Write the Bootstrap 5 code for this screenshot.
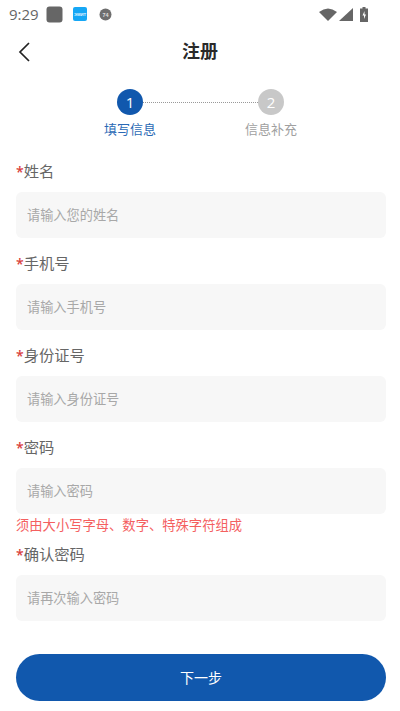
<!DOCTYPE html>
<html lang="zh">
<head>
<meta charset="utf-8">
<title>注册</title>
<link href="https://cdn.jsdelivr.net/npm/bootstrap@5.3.0/dist/css/bootstrap.min.css" rel="stylesheet">
<style>
html,body{height:100%}
body{font-family:"Open Sans","Noto Sans CJK SC",sans-serif;color:#333;background:#fff;overflow:hidden;width:400px}
.stat{height:28px;padding:0 0 0 9px;color:#666;font-size:15px;line-height:28px}
.stat svg{display:block}
.topbar{height:48px}
.topbar h1{font-size:18px;font-weight:700;color:#2a2a2a;margin:0}
.backbtn{left:17px;top:12px;line-height:0}
.stepper{height:84px;padding-top:13px;width:211px;margin-left:95px}
.stepitem{width:70px;font-size:13px;line-height:18px}
.dot{width:26px;height:26px;border-radius:50%;color:#fff;font-size:15px;line-height:26px;margin-bottom:5px}
.dot-on{background:#1158ad}
.dot-off{background:#c8c8c8}
.lab-on{color:#2a69b5}
.lab-off{color:#a0a0a0}
.dash{top:26px;left:48px;right:48px;border-top:1px dotted #999;height:0}
.formarea{padding:0 14px 0 16px}
.fieldlab{font-size:15.3px;line-height:22px;height:22px;color:#666;margin-bottom:10px}
.fieldlab b{color:#d9403c;font-weight:600;font-size:14px;line-height:1}
.fieldbox{display:block;width:100%;height:46px;background:#f7f7f7;border:0;border-radius:6px;padding:0 11px;font-size:13.2px;color:#333;font-family:inherit}
.fieldbox::placeholder{color:#a8a8a8;opacity:1}
.fieldbox:focus{outline:0}
.fieldrow{margin-bottom:14px}
.fieldrow.tight{margin-bottom:0}
.hint{font-size:13.3px;line-height:18px;height:18px;color:#f4605f;margin:2px 0 9px}
.nextbtn{height:47px;border-radius:24px;background:#1158ad;border:0;color:#fff;font-size:14px;margin-top:33px;width:100%}
.nextbtn:hover{background:#1158ad;color:#fff}
.ic1{margin-left:7px}
.ic2{margin-left:10px}
.ic3{margin-left:12px}
.statright{margin-right:32px}
.sig{margin-left:2px}
.batt{margin-left:7px}
.tinyt{font-family:"Liberation Sans",sans-serif;font-weight:700}
</style>
</head>
<body>
<div class="stat d-flex align-items-center">
  <span>9:29</span>
  <svg class="ic1" width="17" height="17" viewBox="0 0 17 17"><rect x=".5" y=".5" width="16" height="16" rx="3" fill="#666"/></svg>
  <svg class="ic2" width="14" height="14" viewBox="0 0 14 14"><rect width="14" height="14" rx="2" fill="#16a7f5"/><text class="tinyt" x="7" y="8.700" font-size="4.200" text-anchor="middle" fill="#e4f5ff">ЭМИТ</text></svg>
  <svg class="ic3" width="13" height="13" viewBox="0 0 13 13"><circle cx="6.500" cy="6.500" r="6" fill="#6e6e6e"/><text class="tinyt" x="6.500" y="8.500" font-size="5.500" text-anchor="middle" fill="#ddd">74</text></svg>
  <div class="statright ms-auto d-flex align-items-center">
    <svg width="18" height="13" viewBox="0 0 18 13"><path d="M0 4Q9-3 18 4L9 13Z" fill="#666"/></svg>
    <svg class="sig" width="14" height="13" viewBox="0 0 14 13"><path d="M14 0V13H0Z" fill="#666"/></svg>
    <svg class="batt" width="8" height="15" viewBox="0 0 8 15"><path d="M2.500 0h3v1.500H8V15H0V1.500h2.500Z" fill="#666"/><path d="M4.500 4 2.500 8.500H4V12L6 7.500H4.500Z" fill="#fff"/></svg>
  </div>
</div>
<div class="topbar position-relative d-flex align-items-center justify-content-center">
  <span class="backbtn position-absolute">
    <svg width="14" height="24" viewBox="0 0 14 24"><path d="M12 3 3 12l9 9" fill="none" stroke="#222" stroke-width="1.700"/></svg>
  </span>
  <h1>注册</h1>
</div>
<div class="stepper position-relative d-flex justify-content-between">
  <div class="dash position-absolute"></div>
  <div class="stepitem d-flex flex-column align-items-center position-relative">
    <div class="dot dot-on text-center">1</div><div class="lab-on text-nowrap">填写信息</div>
  </div>
  <div class="stepitem d-flex flex-column align-items-center position-relative">
    <div class="dot dot-off text-center">2</div><div class="lab-off text-nowrap">信息补充</div>
  </div>
</div>
<form class="formarea">
  <div class="fieldrow"><div class="fieldlab"><b>*</b>姓名</div><input class="fieldbox" placeholder="请输入您的姓名"></div>
  <div class="fieldrow"><div class="fieldlab"><b>*</b>手机号</div><input class="fieldbox" placeholder="请输入手机号"></div>
  <div class="fieldrow"><div class="fieldlab"><b>*</b>身份证号</div><input class="fieldbox" placeholder="请输入身份证号"></div>
  <div class="fieldrow tight"><div class="fieldlab"><b>*</b>密码</div><input class="fieldbox" placeholder="请输入密码"></div>
  <div class="hint">须由大小写字母、数字、特殊字符组成</div>
  <div class="fieldrow tight"><div class="fieldlab"><b>*</b>确认密码</div><input class="fieldbox" placeholder="请再次输入密码"></div>
  <button type="button" class="btn nextbtn d-block">下一步</button>
</form>
<script src="https://cdn.jsdelivr.net/npm/bootstrap@5.3.0/dist/js/bootstrap.bundle.min.js"></script>
</body>
</html>
